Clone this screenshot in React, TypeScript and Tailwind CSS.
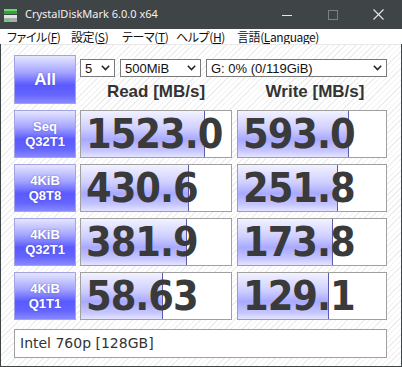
import React from "react";

type Row = {
  top: string;
  bottom: string;
  read: string;
  readFill: number;
  write: string;
  writeFill: number;
};

const rows: Row[] = [
  { top: "Seq", bottom: "Q32T1", read: "1523.0", readFill: 124, write: "593.0", writeFill: 111 },
  { top: "4KiB", bottom: "Q8T8", read: "430.6", readFill: 108, write: "251.8", writeFill: 100 },
  { top: "4KiB", bottom: "Q32T1", read: "381.9", readFill: 106, write: "173.8", writeFill: 95 },
  { top: "4KiB", bottom: "Q1T1", read: "58.63", readFill: 82, write: "129.1", writeFill: 91 },
];

const menus = [
  { label: "ファイル(", key: "F", w: "w-[64px]" },
  { label: "設定(", key: "S", w: "w-[51px]" },
  { label: "テーマ(", key: "T", w: "w-[54px]" },
  { label: "ヘルプ(", key: "H", w: "w-[61px]" },
  { label: "言語(", key: "L", rest: "anguage", w: "w-[90px]" },
];

function Chevron() {
  return (
    <svg width="9" height="6" viewBox="0 0 9 6" className="shrink-0">
      <path d="M0.8 0.8 L4.5 4.6 L8.2 0.8" fill="none" stroke="#222" strokeWidth="1.5" />
    </svg>
  );
}

function Select(props: { text: string; w: string }) {
  return (
    <div
      className={`${props.w} h-[18px] bg-white border border-[#7a7a7a] flex items-center justify-between pl-[4px] pr-[4px] text-[13px] leading-none text-[#111] font-['Liberation_Sans',sans-serif]`}
    >
      <span>{props.text}</span>
      <Chevron />
    </div>
  );
}

function Label(props: { children: React.ReactNode }) {
  return (
    <div className="w-[62px] h-full border border-[#a4a4e4] bg-[linear-gradient(to_bottom,#e6e6ff_0%,#a4a4ff_35%,#5a5aff_62%,#6464ff_82%,#8888ff_100%)] flex flex-col items-center justify-center text-white font-bold font-['Liberation_Sans',sans-serif] [text-shadow:0_0_2px_rgba(60,60,160,0.6)]">
      {props.children}
    </div>
  );
}

function Value(props: { text: string; fill: number; w: string }) {
  return (
    <div className={`${props.w} h-full relative bg-white border border-[#a0a0a0] flex items-center`}>
      <div
        className="absolute left-0 top-0 bottom-0 border-r border-[#5c5caa] bg-[linear-gradient(to_bottom,#f2f2ff_0%,#cfcfff_38%,#a9a9ff_62%,#c4c4ff_85%,#e4e4ff_100%)]"
        style={{ width: props.fill }}
      />
      <span className="relative pl-[5px] text-[41px] leading-none font-bold text-[#3a3a3a] tracking-[-1px] font-['DejaVu_Sans_Condensed','DejaVu_Sans',sans-serif]">
        {props.text}
      </span>
    </div>
  );
}

function AppIcon() {
  return (
    <svg width="16" height="16" viewBox="0 0 16 16">
      <rect x="0" y="0" width="13" height="2" fill="#6ad86e" />
      <rect x="0" y="2" width="13" height="3" fill="#2fa63a" />
      <rect x="0" y="6" width="13" height="3" fill="#e4e4e4" />
      <rect x="0" y="9" width="13" height="4" fill="#a9acae" />
      <rect x="2" y="10" width="3" height="2" fill="#4cd45a" />
    </svg>
  );
}

export default function App() {
  return (
    <div className="w-[402px] h-[367px] flex flex-col overflow-hidden bg-[#3f4447]">
      {/* title bar */}
      <div className="h-[29px] flex items-center bg-[#3f4447] shrink-0">
        <div className="pl-[4px] pt-[4px] w-[25px]">
          <AppIcon />
        </div>
        <span className="text-[11px] text-[#f2f2f2] font-['Noto_Sans',sans-serif]">
          CrystalDiskMark 6.0.0 x64
        </span>
        <div className="ml-auto flex h-full">
          <div className="w-[46px] flex items-center justify-center">
            <svg width="10" height="10" viewBox="0 0 10 10">
              <path d="M0 5.5 H10" stroke="#e6e6e6" strokeWidth="1" />
            </svg>
          </div>
          <div className="w-[46px] flex items-center justify-center">
            <svg width="10" height="10" viewBox="0 0 10 10">
              <rect x="0.5" y="0.5" width="9" height="9" fill="none" stroke="#7c8184" strokeWidth="1" />
            </svg>
          </div>
          <div className="w-[46px] flex items-center justify-center pr-[2px]">
            <svg width="11" height="11" viewBox="0 0 11 11">
              <path d="M0.5 0.5 L10.5 10.5 M10.5 0.5 L0.5 10.5" stroke="#e6e6e6" strokeWidth="1.1" />
            </svg>
          </div>
        </div>
      </div>

      {/* menu bar */}
      <div className="h-[15px] bg-white flex items-center pl-[7px] text-[12px] leading-none text-[#111] font-['Noto_Sans_CJK_JP',sans-serif] tracking-[-0.4px] [font-feature-settings:'palt'] shrink-0">
        {menus.map((m) => (
          <span key={m.key} className={`${m.w} shrink-0 whitespace-nowrap`}>
            {m.label}
            <u className="underline-offset-[1px]">{m.key}</u>
            {m.rest}
            {")"}
          </span>
        ))}
      </div>

      {/* client area */}
      <div className="flex-1 mx-[1px] mb-[1px] pt-[10px] pl-[13px] bg-[repeating-linear-gradient(135deg,#ffffff_0px,#ffffff_3px,#eeeeee_3px,#eeeeee_4px)] border-t border-[#e8e8e8]">
        <div className="flex h-[49px]">
          <div className="w-[62px] h-full border border-[#a4a4e4] bg-[linear-gradient(to_bottom,#e6e6ff_0%,#a4a4ff_35%,#5a5aff_62%,#6464ff_82%,#8888ff_100%)] flex items-center justify-center text-white text-[17px] font-bold font-['Liberation_Sans',sans-serif] [text-shadow:0_0_2px_rgba(60,60,160,0.6)]">
            All
          </div>
          <div className="ml-[4px] flex flex-col">
            <div className="mt-[4px] flex gap-[5px]">
              <Select text="5" w="w-[35px]" />
              <Select text="500MiB" w="w-[81px]" />
              <Select text="G: 0% (0/119GiB)" w="w-[181px]" />
            </div>
            <div className="mt-[4px] h-[22px] flex items-center gap-[5px] text-[17px] font-bold text-[#333] font-['Liberation_Sans',sans-serif]">
              <div className="w-[152px] text-center">Read [MB/s]</div>
              <div className="w-[150px] text-center pl-[6px]">Write [MB/s]</div>
            </div>
          </div>
        </div>

        <div className="mt-[6px] flex flex-col gap-[6px]">
          {rows.map((r, i) => (
            <div key={i} className="flex h-[48px]">
              <Label>
                <span className="text-[13px] leading-[15px]">{r.top}</span>
                <span className="text-[13px] leading-[15px]">{r.bottom}</span>
              </Label>
              <div className="ml-[4px]">
                <Value text={r.read} fill={r.readFill} w="w-[152px]" />
              </div>
              <div className="ml-[5px]">
                <Value text={r.write} fill={r.writeFill} w="w-[150px]" />
              </div>
            </div>
          ))}
        </div>

        <div className="mt-[9px] w-[373px] h-[29px] bg-white border border-[#a0a0a0] flex items-center pl-[5px] text-[14px] text-[#333] font-['DejaVu_Sans',sans-serif]">
          Intel 760p [128GB]
        </div>
      </div>
    </div>
  );
}
